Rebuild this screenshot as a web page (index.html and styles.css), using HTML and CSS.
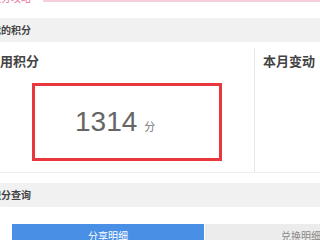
FILE: index.html
```html
<!DOCTYPE html>
<html lang="zh-CN">
<head>
  <meta charset="UTF-8">
  <meta name="viewport" content="width=device-width, initial-scale=1.0">
  <title>我的积分</title>
  <link rel="stylesheet" href="styles.css">
</head>
<body>
  <div class="page">
    <div class="topnav">
      <span class="topnav-tab">积分攻略</span>
      <span class="topnav-line"></span>
    </div>

    <div class="section-title">我的积分</div>

    <div class="summary">
      <div class="summary-left">
        <div class="summary-label">可用积分</div>
        <div class="points-box">
          <span class="points-num">1314</span>
          <span class="points-unit">分</span>
        </div>
      </div>
      <div class="summary-right">
        <div class="summary-label">本月变动</div>
      </div>
    </div>

    <div class="section-title">积分查询</div>

    <div class="tabs">
      <div class="tab tab-active">分享明细</div>
      <div class="tab">兑换明细</div>
    </div>
  </div>
</body>
</html>
```

FILE: styles.css
```css
/* General styles */
body {
  margin: 0;
  width: 320px;
  height: 240px;
  overflow: hidden;
  background: #fff;
  font-family: "Noto Sans CJK SC", "Liberation Sans", sans-serif;
  color: #333;
}

.page {
  margin-left: -13px;
  width: 420px;
}

/* Top nav */
.topnav {
  display: flex;
  margin-top: -8px;
  height: 26px;
}

.topnav-tab {
  color: #e8729f;
  font-size: 10px;
  line-height: 12px;
  padding-left: 4px;
}

.topnav-line {
  flex: 1;
  margin-left: 12px;
  margin-top: 8px;
  height: 0;
  border-top: 2px solid #f6cfdf;
}

/* Section bars */
.section-title {
  height: 24px;
  line-height: 24px;
  background: #f1f1f1;
  font-size: 10px;
  font-weight: bold;
  color: #444;
  padding-left: 4px;
}

/* Summary */
.summary {
  display: flex;
  padding-top: 6px;
  border-bottom: 1px solid #eee;
  margin-bottom: 10px;
}

.summary-left {
  width: 267px;
  border-right: 1px solid #e8e8e8;
  padding-bottom: 11px;
}

.summary-right {
  flex: 1;
  padding-left: 8px;
}

.summary-label {
  font-size: 13px;
  font-weight: bold;
  color: #444;
  line-height: 14px;
  margin-top: 6px;
}

.points-box {
  margin: 15px 0 0 45px;
  width: 144px;
  height: 72px;
  border: 3px solid #e8383d;
  display: flex;
  align-items: baseline;
  padding-left: 40px;
}

.points-num {
  font-family: "Liberation Sans", sans-serif;
  font-size: 28px;
  line-height: 72px;
  color: #666;
}

.points-unit {
  font-size: 11px;
  color: #777;
  margin-left: 7px;
}

/* Tabs */
.tabs {
  display: flex;
  margin-top: 17px;
  padding-left: 25px;
}

.tab {
  width: 192px;
  height: 20px;
  line-height: 24px;
  text-align: center;
  font-size: 10px;
  color: #888;
  background: #ececec;
}

.tab-active {
  background: #4a8fe6;
  color: #fff;
  margin-right: 1px;
}
```
